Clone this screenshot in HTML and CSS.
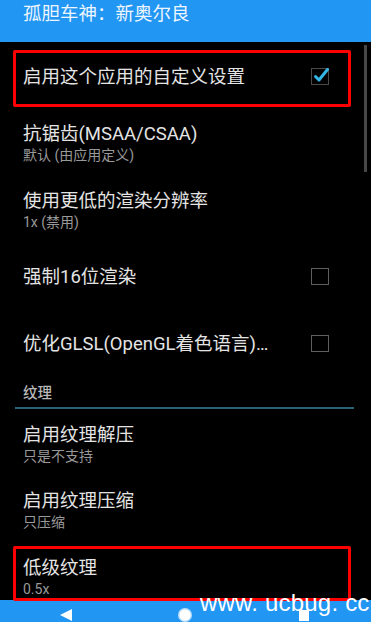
FILE: index.html
```html
<!DOCTYPE html>
<html lang="zh-CN">
<head>
<meta charset="utf-8">
<title>孤胆车神：新奥尔良</title>
<link rel="stylesheet" href="styles.css">
</head>
<body>
<div class="screen">
  <header class="appbar">孤胆车神：新奥尔良</header>
  <main class="list">
    <div class="row">
      <div class="text"><div class="title">启用这个应用的自定义设置</div></div>
      <span class="checkbox checked">
        <svg viewBox="0 0 18 17" width="18" height="17"><path d="M4.5 8.5 L8 12 L16.5 1.5" fill="none" stroke="#33b5e5" stroke-width="3" stroke-linecap="round" stroke-linejoin="round"/></svg>
      </span>
    </div>
    <div class="row">
      <div class="text"><div class="title">抗锯齿(MSAA/CSAA)</div><div class="sub">默认 (由应用定义)</div></div>
    </div>
    <div class="row">
      <div class="text"><div class="title">使用更低的渲染分辨率</div><div class="sub">1x (禁用)</div></div>
    </div>
    <div class="row">
      <div class="text"><div class="title">强制16位渲染</div></div>
      <span class="checkbox"></span>
    </div>
    <div class="row">
      <div class="text"><div class="title">优化GLSL(OpenGL着色语言)…</div></div>
      <span class="checkbox"></span>
    </div>
    <div class="category">纹理</div>
    <div class="row">
      <div class="text"><div class="title">启用纹理解压</div><div class="sub">只是不支持</div></div>
    </div>
    <div class="row">
      <div class="text"><div class="title">启用纹理压缩</div><div class="sub">只压缩</div></div>
    </div>
    <div class="row">
      <div class="text"><div class="title">低级纹理</div><div class="sub">0.5x</div></div>
    </div>
    <div class="scrollbar"></div>
  </main>
  <nav class="navbar">
    <span class="navbtn">
      <svg viewBox="0 0 12 12" width="12" height="12"><path d="M0 6 L12 0 L12 12 Z" fill="#fff"/></svg>
    </span>
    <span class="navbtn">
      <svg viewBox="0 0 16 16" width="16" height="16"><circle cx="8" cy="8" r="7" fill="#bfe0fb"/><circle cx="8" cy="8" r="5.5" fill="#fff"/></svg>
    </span>
    <span class="navbtn">
      <svg viewBox="0 0 12 12" width="12" height="12"><rect x="1" y="1" width="10" height="11" fill="#fff"/></svg>
    </span>
  </nav>
  <div class="mark mark-top"></div>
  <div class="mark mark-bottom"></div>
  <div class="watermark">www. ucbug. cc</div>
</div>
</body>
</html>
```

FILE: styles.css
```css
html, body {
  margin: 0;
  padding: 0;
  background: #000;
}
.screen {
  position: relative;
  width: 371px;
  height: 622px;
  overflow: hidden;
  display: flex;
  flex-direction: column;
  background: #000;
  font-family: Roboto, "Noto Sans CJK SC", sans-serif;
}
.appbar {
  height: 42px;
  flex: none;
  box-sizing: border-box;
  background: #2196f3;
  color: #eef5fd;
  font-size: 18.5px;
  line-height: 28px;
  padding-left: 23px;
}
.list {
  position: relative;
  flex: 1;
  min-height: 0;
  overflow: hidden;
  padding-top: 1.5px;
}
.row {
  height: 66.7px;
  box-sizing: border-box;
  display: flex;
  align-items: center;
  justify-content: space-between;
  padding: 0 42px 0 23px;
}
.text {
  display: flex;
  flex-direction: column;
}
.title {
  color: #e4e4e4;
  font-size: 18.5px;
  line-height: 22px;
  white-space: nowrap;
}
.sub {
  color: #999;
  font-size: 14px;
  line-height: 18px;
  margin-top: 1px;
}
.checkbox {
  width: 18px;
  height: 17px;
  box-sizing: border-box;
  border: 1.5px solid #5e5e5e;
  display: block;
  position: relative;
}
.checkbox.checked {
  border-color: #4a4a4a;
}
.checkbox svg {
  position: absolute;
  left: -1.5px;
  top: -1.5px;
  overflow: visible;
}
.category {
  height: 32px;
  box-sizing: border-box;
  padding-top: 8px;
  padding-left: 8px;
  color: #b8b8b8;
  font-size: 14.5px;
  line-height: 18px;
  font-weight: 500;
  border-bottom: 2px solid #2b6479;
  margin: 0 17px 2px 15px;
}
.scrollbar {
  position: absolute;
  left: 364px;
  top: 3px;
  width: 3px;
  height: 127px;
  background: #474747;
}
.navbar {
  height: 22px;
  flex: none;
  background: #2196f3;
  display: flex;
  align-items: flex-start;
  gap: 95px;
  padding-left: 54px;
  box-sizing: border-box;
}
.navbtn {
  width: 24px;
  height: 22px;
  display: flex;
  justify-content: center;
  padding-top: 9px;
  box-sizing: border-box;
}
.navbtn:nth-child(2) {
  padding-top: 7px;
}
.mark {
  position: absolute;
  left: 13px;
  width: 338px;
  box-sizing: border-box;
  border: 3px solid #ff0000;
  border-radius: 2px;
}
.mark-top {
  top: 50px;
  height: 57px;
}
.mark-bottom {
  top: 546px;
  height: 55px;
}
.watermark {
  position: absolute;
  left: 200px;
  top: 588px;
  color: #fff;
  font-family: "Liberation Sans", Arial, sans-serif;
  font-size: 24px;
  line-height: 30px;
  letter-spacing: 0.2px;
  white-space: nowrap;
}
```
